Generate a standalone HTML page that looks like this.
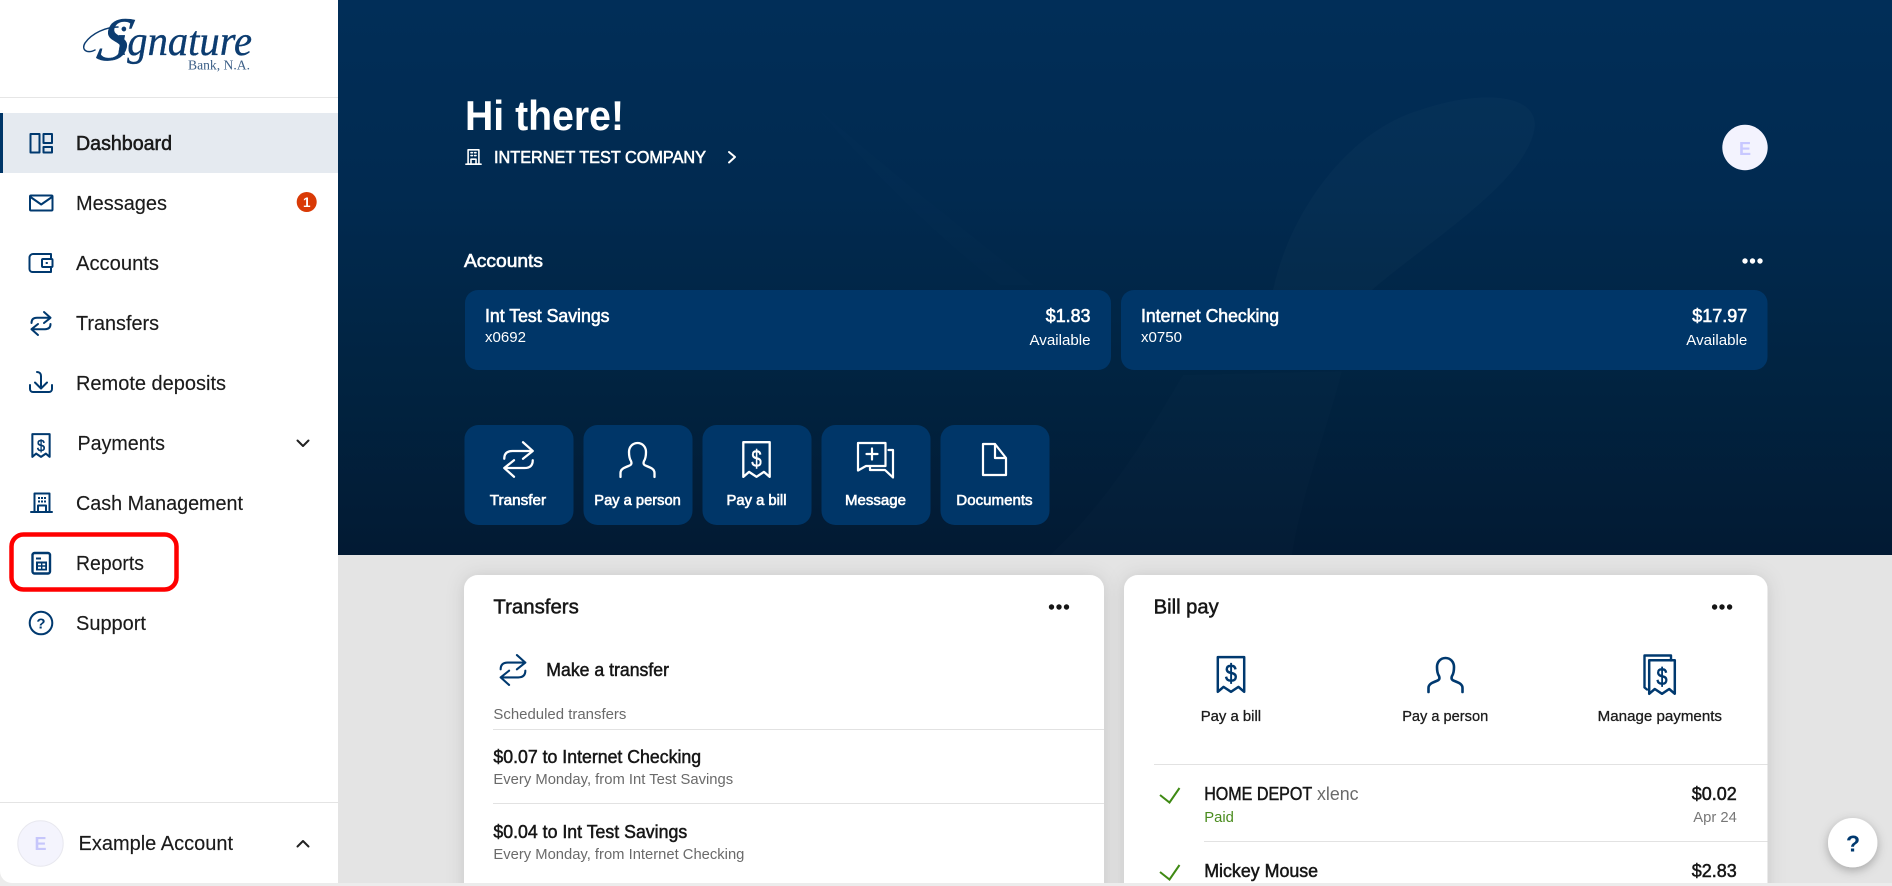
<!DOCTYPE html>
<html lang="en">
<head>
<meta charset="utf-8">
<title>Dashboard</title>
<style>
html,body{margin:0;padding:0;width:1892px;height:886px;overflow:hidden;background:#ececec}
svg{display:block;font-family:"Liberation Sans",Arial,sans-serif}
.n{font-size:20px;fill:#1b1b1b;stroke:#1b1b1b;stroke-width:.15px}
.w{fill:#fff}.wm{fill:#fff;stroke:#fff;stroke-width:.6px}
.d{fill:#161616;stroke:#161616;stroke-width:.5px}
.i{fill:none;stroke:#00396f;stroke-width:2;stroke-linecap:round;stroke-linejoin:round}
.iw{fill:none;stroke:#fff;stroke-width:2;stroke-linecap:round;stroke-linejoin:round}
.g{fill:#6a6a6a}
</style>
</head>
<body>
<svg width="1892" height="886" viewBox="0 0 1892 886" xmlns="http://www.w3.org/2000/svg">
<defs>
<linearGradient id="h" x1="0" y1="0" x2="0" y2="1">
<stop offset="0" stop-color="#012e58"/>
<stop offset=".35" stop-color="#012a50"/>
<stop offset=".7" stop-color="#012340"/>
<stop offset="1" stop-color="#021a33"/>
</linearGradient>
<filter id="s" x="-10%" y="-10%" width="120%" height="120%"><feDropShadow dx="0" dy="1" stdDeviation="9" flood-color="#000" flood-opacity=".13"/></filter>
<filter id="hs" x="-50%" y="-50%" width="200%" height="200%"><feDropShadow dx="0" dy="3" stdDeviation="5" flood-color="#000" flood-opacity=".28"/></filter>
<g id="tr"><path d="M-9.5-.5C-9.5-4-7.5-5.7-4-5.7H9.5M3-11.5L9.5-5.7 3-.5"/><path d="M9.5 .5C9.5 4 7.5 5.7 4 5.7H-9.5M-3 .5L-9.5 5.7-3 11.5"/></g>
<path id="rc" d="M-8-10.5H8V10.5L4.5 7.5 0 10.5-4.5 7.5-8 10.5Z"/>
<path id="ps" d="M-17 17V13C-17 9-13 7.5-9 6-6 5-5.5 3.5-6.5 1-8.5-2-8.5-5-8.5-8-8.5-13-5-17 0-17 5-17 8.5-13 8.5-8 8.5-5 8.5-2 6.5 1 5.5 3.5 6 5 9 6 13 7.5 17 9 17 13V17"/>
</defs>

<!-- main -->
<rect x="338" y="0" width="1554" height="883" fill="#e4e4e4"/>
<rect x="338" y="0" width="1554" height="555" fill="url(#h)"/>
<!-- watermark -->
<path d="M1273 290C1290 210 1350 130 1420 110 1470 92 1535 90 1535 125 1530 180 1430 240 1372 290Z" fill="#fff" opacity=".018"/>
<path d="M1183 375L1342 371C1330 420 1300 500 1292 555H1050C1110 500 1150 430 1183 375Z" fill="#fff" opacity=".01"/>
<path d="M816 107C900 180 990 250 1034 285L1000 285C940 240 870 170 816 107Z" fill="#fff" opacity=".008"/>

<!-- hero text -->
<text x="465" y="130" font-size="42" font-weight="700" class="w" textLength="159" lengthAdjust="spacingAndGlyphs">Hi there!</text>
<g transform="translate(473.5,157) scale(.72)" class="iw" style="stroke-width:2.2"><rect x="-7.5" y="-10" width="15" height="20"/><path d="M-10.5 10H10.5M-3.5 3V10M3.5 3V10M-3.5 3H3.5M-3.5-6H-1.5M1.5-6H3.5M-3.5-2H-1.5M1.5-2H3.5"/></g>
<text x="494" y="163" font-size="17.5" class="wm" textLength="212" lengthAdjust="spacingAndGlyphs">INTERNET TEST COMPANY</text>
<path d="M729 152L735 157 729 162.5" class="iw"/>
<circle cx="1745" cy="147.5" r="22.7" fill="#f3f3fe"/>
<text x="1745" y="155" font-size="18" font-weight="700" fill="#c8c8ff" text-anchor="middle">E</text>

<text x="464" y="267" font-size="18" class="wm" textLength="79" lengthAdjust="spacingAndGlyphs">Accounts</text>
<g fill="#fff"><circle cx="1745" cy="261" r="2.7"/><circle cx="1752.5" cy="261" r="2.7"/><circle cx="1760" cy="261" r="2.7"/></g>

<!-- account cards -->
<rect x="465" y="290" width="646" height="80" rx="13" fill="#003668"/>
<rect x="1121" y="290" width="646.5" height="80" rx="13" fill="#003668"/>
<text x="485" y="322" font-size="18" class="wm" textLength="124.5" lengthAdjust="spacingAndGlyphs">Int Test Savings</text>
<text x="485" y="342" font-size="15" class="w" textLength="41" lengthAdjust="spacingAndGlyphs">x0692</text>
<text x="1045.8" y="322" font-size="18" class="wm" textLength="44.7" lengthAdjust="spacingAndGlyphs">$1.83</text>
<text x="1029.5" y="345" font-size="15" class="w" textLength="61" lengthAdjust="spacingAndGlyphs">Available</text>
<text x="1141" y="322" font-size="18" class="wm" textLength="138" lengthAdjust="spacingAndGlyphs">Internet Checking</text>
<text x="1141" y="342" font-size="15" class="w" textLength="41" lengthAdjust="spacingAndGlyphs">x0750</text>
<text x="1692.3" y="322" font-size="18" class="wm" textLength="55" lengthAdjust="spacingAndGlyphs">$17.97</text>
<text x="1686.3" y="345" font-size="15" class="w" textLength="61" lengthAdjust="spacingAndGlyphs">Available</text>

<!-- action buttons -->
<g fill="#003668">
<rect x="464.5" y="425" width="109" height="100" rx="14"/>
<rect x="583.5" y="425" width="109" height="100" rx="14"/>
<rect x="702.5" y="425" width="109" height="100" rx="14"/>
<rect x="821.5" y="425" width="109" height="100" rx="14"/>
<rect x="940.5" y="425" width="109" height="100" rx="14"/>
</g>
<use href="#tr" transform="translate(518.5,459.5) scale(1.5)" class="iw" style="stroke-width:1.5"/>
<use href="#ps" transform="translate(637.5,460)" class="iw" style="stroke-width:2.3"/>
<use href="#rc" transform="translate(756.5,459.5) scale(1.65)" class="iw" style="stroke-width:1.4"/>
<text x="751.2" y="467" font-size="24" fill="#fff" stroke="#fff" stroke-width=".4" textLength="10.5" lengthAdjust="spacingAndGlyphs">$</text>
<path d="M858 443H885.5V466H866L858 470.5ZM866.5 454H877.5M872 448.5V459.5M888.5 450H893V477.5L885 470H870V467" class="iw" style="stroke-width:2.2"/>
<path d="M983 444H995L1006 458V475H983ZM995 444V458H1006" class="iw" style="stroke-width:2.2"/>
<g font-size="15" class="wm">
<text x="489.8" y="505" textLength="56.3" lengthAdjust="spacingAndGlyphs">Transfer</text>
<text x="594.3" y="505" textLength="86.5" lengthAdjust="spacingAndGlyphs">Pay a person</text>
<text x="726.5" y="505" textLength="60" lengthAdjust="spacingAndGlyphs">Pay a bill</text>
<text x="845" y="505" textLength="61" lengthAdjust="spacingAndGlyphs">Message</text>
<text x="956.3" y="505" textLength="76.3" lengthAdjust="spacingAndGlyphs">Documents</text>
</g>

<!-- transfers card -->
<rect x="464" y="575" width="640" height="340" rx="14" fill="#fff" filter="url(#s)"/>
<text x="493.4" y="613.5" font-size="20" class="d" textLength="85.4" lengthAdjust="spacingAndGlyphs">Transfers</text>
<g fill="#161616"><circle cx="1051.5" cy="607" r="2.7"/><circle cx="1059" cy="607" r="2.7"/><circle cx="1066.5" cy="607" r="2.7"/></g>
<use href="#tr" transform="translate(513,670) scale(1.3)" class="i" style="stroke-width:1.6"/>
<text x="546.3" y="676" font-size="18" class="d" textLength="122.7" lengthAdjust="spacingAndGlyphs">Make a transfer</text>
<text x="493.4" y="719" font-size="14.5" class="g" textLength="133" lengthAdjust="spacingAndGlyphs">Scheduled transfers</text>
<rect x="493" y="729" width="611" height="1" fill="#e2e2e2"/>
<text x="493.4" y="763" font-size="18" class="d" textLength="207.7" lengthAdjust="spacingAndGlyphs">$0.07 to Internet Checking</text>
<text x="493.4" y="784" font-size="15" class="g" textLength="239.8" lengthAdjust="spacingAndGlyphs">Every Monday, from Int Test Savings</text>
<rect x="493" y="803" width="611" height="1" fill="#e2e2e2"/>
<text x="493.4" y="838" font-size="18" class="d" textLength="193.8" lengthAdjust="spacingAndGlyphs">$0.04 to Int Test Savings</text>
<text x="493.4" y="859" font-size="15" class="g" textLength="251" lengthAdjust="spacingAndGlyphs">Every Monday, from Internet Checking</text>

<!-- bill pay card -->
<rect x="1124" y="575" width="643.5" height="340" rx="14" fill="#fff" filter="url(#s)"/>
<text x="1153.7" y="613.5" font-size="20" class="d" textLength="65" lengthAdjust="spacingAndGlyphs">Bill pay</text>
<g fill="#161616"><circle cx="1714.6" cy="607" r="2.7"/><circle cx="1722" cy="607" r="2.7"/><circle cx="1729.6" cy="607" r="2.7"/></g>
<use href="#rc" transform="translate(1231,674.5) scale(1.65)" class="i" style="stroke-width:1.5"/>
<text x="1225" y="682" font-size="25" fill="#00396f" stroke="#00396f" stroke-width=".7" textLength="12" lengthAdjust="spacingAndGlyphs">$</text>
<use href="#ps" transform="translate(1445.5,675)" class="i" style="stroke-width:2.6"/>
<use href="#rc" transform="translate(1662,677) scale(1.6)" class="i" style="stroke-width:1.55"/>
<path d="M1671 660.5V655.5H1644.5V687.5L1647 689.5" class="i" style="stroke-width:2.4"/>
<text x="1656.5" y="685" font-size="24" fill="#00396f" stroke="#00396f" stroke-width=".7" textLength="11" lengthAdjust="spacingAndGlyphs">$</text>
<g font-size="15" fill="#1c1c1c" stroke="#1c1c1c" stroke-width=".3">
<text x="1200.7" y="721" textLength="60.4" lengthAdjust="spacingAndGlyphs">Pay a bill</text>
<text x="1402.2" y="721" textLength="86" lengthAdjust="spacingAndGlyphs">Pay a person</text>
<text x="1597.7" y="721" textLength="124.3" lengthAdjust="spacingAndGlyphs">Manage payments</text>
</g>
<rect x="1154" y="764" width="613.5" height="1" fill="#e2e2e2"/>
<path d="M1160 795L1169.5 802.5 1179.5 788" fill="none" stroke="#3f8a14" stroke-width="2"/>
<text x="1204.2" y="800" font-size="18" class="d" textLength="108" lengthAdjust="spacingAndGlyphs">HOME DEPOT</text>
<text x="1317" y="800" font-size="18" class="g" textLength="41.6" lengthAdjust="spacingAndGlyphs">xlenc</text>
<text x="1204.2" y="822" font-size="15" fill="#4a8c1e" textLength="29.7" lengthAdjust="spacingAndGlyphs">Paid</text>
<text x="1691.8" y="800" font-size="18" class="d" textLength="45" lengthAdjust="spacingAndGlyphs">$0.02</text>
<text x="1693.3" y="822" font-size="15" fill="#777" textLength="43.6" lengthAdjust="spacingAndGlyphs">Apr 24</text>
<rect x="1204" y="841" width="563.5" height="1" fill="#e2e2e2"/>
<path d="M1160 872L1169.5 879.5 1179.5 865" fill="none" stroke="#3f8a14" stroke-width="2"/>
<text x="1204.2" y="877" font-size="18" class="d" textLength="113.9" lengthAdjust="spacingAndGlyphs">Mickey Mouse</text>
<text x="1691.8" y="877" font-size="18" class="d" textLength="45" lengthAdjust="spacingAndGlyphs">$2.83</text>

<!-- bottom strip -->
<rect x="0" y="883" width="1892" height="3" fill="#ececec"/>

<!-- help -->
<circle cx="1852.7" cy="842.7" r="24.7" fill="#fff" filter="url(#hs)"/>
<text x="1853" y="851.5" font-size="23" font-weight="700" fill="#00396f" text-anchor="middle">?</text>

<!-- sidebar -->
<path d="M0 0H338V883H12A12 12 0 0 1 0 871Z" fill="#fff"/>
<rect x="0" y="97" width="338" height="1" fill="#e6e6e6"/>
<rect x="0" y="802" width="338" height="1" fill="#e4e4e4"/>
<rect x="0" y="113" width="338" height="60" fill="#e5eaf0"/>
<rect x="0" y="113" width="3" height="60" fill="#003668"/>

<!-- logo -->
<g fill="#0c3c70" stroke="#0c3c70" font-family="'Liberation Serif',serif" font-style="italic">
<text transform="translate(95,60) skewX(-14)" font-size="62" stroke-width=".5">S</text>
<text x="116" y="55" font-size="42" stroke-width=".35" textLength="136" lengthAdjust="spacingAndGlyphs">ignature</text>
</g>
<path d="M118 27C106 27 92 33 85 43 81 50 87 54 95 50" fill="none" stroke="#0c3c70" stroke-width="1.5" stroke-linecap="round"/>
<text x="188" y="69.5" font-family="'Liberation Serif',serif" font-size="14" fill="#3c5f87" textLength="62" lengthAdjust="spacingAndGlyphs">Bank, N.A.</text>

<!-- nav icons -->
<g class="i">
<rect x="30.5" y="134" width="9" height="18.5"/>
<rect x="43.5" y="134" width="8.5" height="9"/>
<rect x="43.5" y="147" width="8.5" height="5.5"/>
<rect x="30" y="195.5" width="22.5" height="15" rx="1"/>
<path d="M30.5 197L41.2 204.5 52 197"/>
<path d="M51 259V254H33A3.5 3.5 0 0 0 29.5 257.5V269A3 3 0 0 0 32.5 272H51V267"/>
<rect x="42" y="259" width="10.5" height="8" rx="1"/>
<path d="M46.5 263H47"/>
<path d="M30 385V389A3 3 0 0 0 33 392H49A3 3 0 0 0 52 389V385"/>
<path d="M37 372C39.5 372 41 373.5 41 376V388.5M35 382.5L41 388.5 47 382.5"/>
<rect x="34.5" y="493.5" width="15" height="18.5"/>
<path d="M31 512H52M38 512V505.5H46V512"/>
<rect x="32.5" y="553" width="17.5" height="20.5" rx="2" style="stroke-width:2.4"/>
<circle cx="41" cy="623" r="11.3"/>
</g>
<use href="#tr" transform="translate(41,323.5)" class="i"/>
<use href="#rc" transform="translate(41,445.5) scale(1.08)" class="i" style="stroke-width:1.9"/>
<text x="37" y="451" font-size="16" fill="#00396f" stroke="#00396f" stroke-width=".5" textLength="8" lengthAdjust="spacingAndGlyphs">$</text>
<g fill="#00396f">
<rect x="38" y="497" width="2" height="2"/><rect x="41" y="497" width="2" height="2"/><rect x="44" y="497" width="2" height="2"/>
<rect x="38" y="500.5" width="2" height="2"/><rect x="41" y="500.5" width="2" height="2"/><rect x="44" y="500.5" width="2" height="2"/>
<rect x="36" y="557.5" width="5" height="2"/>
<path d="M36 561.5H47V570.5H36ZM38 563.5V565.2H41V563.5ZM42.4 563.5V565.2H45.2V563.5ZM38 566.8V568.7H41V566.8ZM42.4 566.8V568.7H45.2V566.8Z" fill-rule="evenodd"/>
</g>
<text x="41" y="628.5" font-size="15" font-weight="700" fill="#00396f" text-anchor="middle">?</text>

<!-- nav text -->
<text x="76" y="150" class="n" style="stroke-width:.55px" textLength="96" lengthAdjust="spacingAndGlyphs">Dashboard</text>
<text x="76" y="210" class="n" textLength="91" lengthAdjust="spacingAndGlyphs">Messages</text>
<text x="76" y="270" class="n" textLength="83" lengthAdjust="spacingAndGlyphs">Accounts</text>
<text x="76" y="330" class="n" textLength="83" lengthAdjust="spacingAndGlyphs">Transfers</text>
<text x="76" y="390" class="n" textLength="150" lengthAdjust="spacingAndGlyphs">Remote deposits</text>
<text x="77.5" y="450" class="n" textLength="87.5" lengthAdjust="spacingAndGlyphs">Payments</text>
<text x="76" y="510" class="n" textLength="167" lengthAdjust="spacingAndGlyphs">Cash Management</text>
<text x="76" y="570" class="n" textLength="68" lengthAdjust="spacingAndGlyphs">Reports</text>
<text x="76" y="630" class="n" textLength="70" lengthAdjust="spacingAndGlyphs">Support</text>

<circle cx="306.7" cy="202" r="10" fill="#d93a06"/>
<text x="306.7" y="207" font-size="13.5" font-weight="700" fill="#fff" text-anchor="middle">1</text>
<path d="M297.5 440.5L303 446 308.5 440.5" fill="none" stroke="#222" stroke-width="2" stroke-linecap="round" stroke-linejoin="round"/>

<rect x="11.5" y="534.5" width="165" height="55" rx="12" fill="none" stroke="#f00" stroke-width="4.5"/>

<circle cx="40.5" cy="843.5" r="22.7" fill="#f4f4fd" stroke="#e8e8ef" stroke-width="1"/>
<text x="40.5" y="850" font-size="18" font-weight="700" fill="#c6c6fb" text-anchor="middle">E</text>
<text x="78.5" y="850" class="n" textLength="154.5" lengthAdjust="spacingAndGlyphs">Example Account</text>
<path d="M297.5 846.5L303 841 308.5 846.5" fill="none" stroke="#222" stroke-width="2" stroke-linecap="round" stroke-linejoin="round"/>
</svg>
</body>
</html>
